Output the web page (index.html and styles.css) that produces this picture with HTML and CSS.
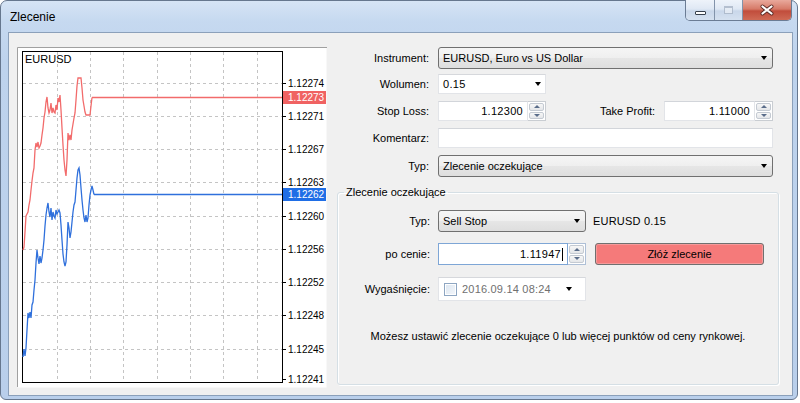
FILE: index.html
```html
<!DOCTYPE html>
<html lang="pl">
<head>
<meta charset="utf-8">
<title>Zlecenie</title>
<link rel="stylesheet" href="styles.css">
</head>
<body>
<div class="window">
  <div class="titlebar">
    <span class="title">Zlecenie</span>
    <div class="caption">
      <div class="cbtn cmin"><span class="min-glyph"></span></div>
      <div class="cbtn cmax"><span class="max-glyph"></span></div>
      <div class="cbtn cclose">
        <svg width="14" height="12" viewBox="-7 -6 14 12">
          <path d="M-4.5,-3.5 L4.5,3.5 M4.5,-3.5 L-4.5,3.5" stroke="#5b2b26" stroke-width="4" stroke-linecap="round"/>
          <path d="M-4.5,-3.5 L4.5,3.5 M4.5,-3.5 L-4.5,3.5" stroke="#ffffff" stroke-width="2.2" stroke-linecap="round"/>
        </svg>
      </div>
    </div>
  </div>
  <div class="client">
    <div class="chart">
      <svg width="310" height="341" viewBox="17 47 310 341">
        <rect x="17.5" y="47.5" width="309" height="340" fill="#ffffff" stroke="none"/>
        <path d="M17.5,387 V47.5 H327" stroke="#a0a0a0" fill="none"/>
        <g stroke="#c4c4c4" stroke-dasharray="3 3" fill="none">
          <path d="M57.5,52 V382 M90.5,52 V382 M123.5,52 V382 M157.5,52 V382 M190.5,52 V382 M223.5,52 V382 M257.5,52 V382"/>
          <path d="M23,83.5 H282 M23,116.5 H282 M23,149.5 H282 M23,182.5 H282 M23,216.5 H282 M23,249.5 H282 M23,282.5 H282 M23,315.5 H282 M23,349.5 H282"/>
        </g>
        <rect x="22.5" y="51.5" width="260" height="331" fill="none" stroke="#000000"/>
        <text class="sym-label" x="25" y="63">EURUSD</text>
        <g stroke="#000" fill="none">
          <path d="M283,83.5 H286 M283,116.5 H286 M283,149.5 H286 M283,182.5 H286 M283,216.5 H286 M283,249.5 H286 M283,282.5 H286 M283,315.5 H286 M283,349.5 H286 M283,379.5 H286"/>
        </g>
        <g class="axis">
          <text x="288" y="87">1.12274</text>
          <text x="288" y="120">1.12271</text>
          <text x="288" y="153">1.12267</text>
          <text x="288" y="186">1.12263</text>
          <text x="288" y="220">1.12260</text>
          <text x="288" y="253">1.12256</text>
          <text x="288" y="286">1.12252</text>
          <text x="288" y="319">1.12248</text>
          <text x="288" y="353">1.12245</text>
          <text x="288" y="383">1.12241</text>
        </g>
        <polyline fill="none" stroke="#f26b6b" stroke-width="1.3" points="23,250 24,247 25,232 26,216 27,214 28,212 29,205 30,200 31,190 32,181 33,173 34,168 35,150 36,143 37,147 38,142 39,148 40,146 41,143 42,135 43,128 44,118 45,112 46,102 47,97 48,108 49,113 50,110 51,103 52,113 53,108 54,112 55,113 56,105 57,110 58,98 59,102 60,95 61,110 62,128 63,145 64,160 65,170 66,176 67,160 68,133 69,140 70,135 71,140 72,130 73,124 74,118 75,113 76,100 77,86 78,78 81,78 82,88 83,100 84,106 85,112 86,115 90,115 91,106 92,97.5"/>
        <path d="M92,97.5 H282" stroke="#f26b6b" stroke-width="1.6" fill="none"/>
        <polyline fill="none" stroke="#2f70dc" stroke-width="1.3" points="23,357 24,349 25,356 26,348 27,330 28,313 29,318 30,312 31,318 32,305 33,302 34,290 35,280 36,263 37,250 38,258 39,264 40,256 41,263 42,258 43,250 44,240 45,226 46,215 47,208 48,203 49,212 50,217 51,208 52,220 53,212 54,216 55,218 56,210 57,214 58,212 59,210 60,213 61,225 62,240 63,254 64,262 65,266 66,262 67,245 68,222 69,228 70,238 71,232 72,222 73,212 74,205 75,202 76,190 77,178 78,170 79,168 80,175 81,188 82,200 83,210 84,218 85,222 86,215 87,222 88,218 89,205 90,195 91,190 92,186 93,190 94,194.5"/>
        <path d="M94,194.5 H282" stroke="#2f70dc" stroke-width="1.3" fill="none"/>
        <rect x="283" y="91" width="43" height="13" fill="#f06262"/>
        <text class="tag" x="288" y="101">1.12273</text>
        <rect x="283" y="188" width="43" height="13" fill="#1f6ee6"/>
        <text class="tag" x="288" y="198">1.12262</text>
      </svg>
    </div>

    <div class="form">
      <div class="row r1">
        <span class="lbl">Instrument:</span>
        <div class="combo w-full"><span class="ctext">EURUSD, Euro vs US Dollar</span><span class="arrow"></span></div>
      </div>
      <div class="row r2">
        <span class="lbl">Wolumen:</span>
        <div class="ecombo w-vol"><span class="ctext num">0.15</span><span class="arrow"></span></div>
      </div>
      <div class="row r3">
        <span class="lbl">Stop Loss:</span>
        <div class="spinbox w-sl">
          <span class="val num">1.12300</span>
          <span class="spin"><span class="up"><i></i></span><span class="dn"><i></i></span></span>
        </div>
        <span class="lbl tp">Take Profit:</span>
        <div class="spinbox w-tp">
          <span class="val num">1.11000</span>
          <span class="spin"><span class="up"><i></i></span><span class="dn"><i></i></span></span>
        </div>
      </div>
      <div class="row r4">
        <span class="lbl">Komentarz:</span>
        <div class="edit w-full"></div>
      </div>
      <div class="row r5">
        <span class="lbl">Typ:</span>
        <div class="combo w-full"><span class="ctext">Zlecenie oczekujące</span><span class="arrow"></span></div>
      </div>

      <fieldset class="group">
        <legend>Zlecenie oczekujące</legend>
        <div class="row g1">
          <span class="glbl">Typ:</span>
          <div class="combo w-g"><span class="ctext">Sell Stop</span><span class="arrow"></span></div>
          <span class="sym">EURUSD 0.15</span>
        </div>
        <div class="row g2">
          <span class="glbl">po cenie:</span>
          <div class="spinbox w-g focus">
            <span class="val num">1.11947<span class="caret"></span></span>
            <span class="spin"><span class="up"><i></i></span><span class="dn"><i></i></span></span>
          </div>
          <div class="btn">Złóż zlecenie</div>
        </div>
        <div class="row g3">
          <span class="glbl">Wygaśnięcie:</span>
          <div class="ecombo w-g exp">
            <span class="chk"></span>
            <span class="date">2016.09.14 08:24</span>
            <span class="arrow"></span>
          </div>
        </div>
        <p class="msg">Możesz ustawić zlecenie oczekujące 0 lub więcej punktów od ceny rynkowej.</p>
      </fieldset>
    </div>
  </div>
</div>
</body>
</html>
```

FILE: styles.css
```css
* { box-sizing: border-box; }
html, body { margin: 0; padding: 0; }
body {
  width: 800px;
  height: 403px;
  overflow: hidden;
  background: #ffffff;
  font-family: "Liberation Sans", Arial, sans-serif;
  font-size: 11px;
  color: #000;
}

.window {
  width: 798px;
  height: 400px;
  border: 1px solid #66778e;
  border-radius: 7px 7px 6px 6px;
  background: linear-gradient(to bottom, #d6e4f5 0px, #c6d9f0 20px, #bed3ed 60px, #b9cfeb 100%);
  padding: 0 4px 3px 7px;
  display: flex;
  flex-direction: column;
}

/* ---------- title bar ---------- */
.titlebar {
  height: 31px;
  flex: none;
  display: flex;
  align-items: flex-start;
  justify-content: space-between;
  margin: 0 -4px 0 -7px;
  padding: 0 5px 0 9px;
}
.title {
  font-size: 12px;
  line-height: 30px;
  padding-top: 1px;
  color: #000;
}
.caption {
  display: flex;
  height: 21px;
  margin-top: -1px;
  border: 1px solid #6b7c94;
  border-top: none;
  border-radius: 0 0 5px 5px;
  overflow: hidden;
}
.cbtn {
  display: flex;
  align-items: center;
  justify-content: center;
  height: 100%;
}
.cmin, .cmax {
  background: linear-gradient(to bottom, #eef3fa 0%, #dfe8f4 45%, #c9d7ea 55%, #d5e1f0 100%);
  border-right: 1px solid #8293aa;
}
.cmin { width: 29px; }
.cmax { width: 28px; }
.cclose {
  width: 48px;
  background: linear-gradient(to bottom, #e9a99c 0%, #d67a68 45%, #c14d3c 55%, #cf6a55 100%);
}
.min-glyph {
  width: 11px;
  height: 4px;
  margin-top: 5px;
  background: #fff;
  border: 1px solid #38404c;
  border-radius: 1px;
}
.max-glyph {
  width: 9px;
  height: 8px;
  border: 1px solid #a9b5c6;
  border-top-width: 2px;
  background: #e8eef6;
  opacity: 0.8;
}

/* ---------- client area ---------- */
.client {
  flex: 1;
  background: #f0f0f0;
  border: 1px solid #8ba0ba;
  display: flex;
  align-items: flex-start;
  padding: 14px 0 0 8px;
}
.chart { width: 310px; height: 341px; flex: none; }
.chart svg { display: block; }
.axis text { font-family: "Liberation Sans", Arial, sans-serif; font-size: 10px; fill: #000; }
.sym-label { font-family: "Liberation Sans", Arial, sans-serif; font-size: 11px; fill: #000; }
.tag { font-family: "Liberation Sans", Arial, sans-serif; font-size: 10px; fill: #fff; }

.form {
  margin-left: 10px;
  width: 442px;
  flex: none;
  display: flex;
  flex-direction: column;
}
.row { display: flex; align-items: center; }
.lbl { width: 92px; margin-right: 9px; text-align: right; flex: none; }
.lbl.tp { width: 109px; }

.r2 { margin-top: 5px; }
.r3 { margin-top: 7px; }
.r4 { margin-top: 7px; }
.r5 { margin-top: 7px; }

.w-full { width: 335px; }
.w-vol { width: 108px; }
.w-sl { width: 108px; }
.w-tp { width: 109px; }
.w-g { width: 148px; }

.combo {
  height: 22px;
  border: 1px solid #707070;
  border-radius: 3px;
  background: linear-gradient(to bottom, #f5f5f5 0%, #efefef 50%, #e6e6e6 51%, #dedede 100%);
  display: flex;
  align-items: center;
  padding-left: 4px;
  flex: none;
}
.ecombo {
  height: 20px;
  background: #fff;
  border: 1px solid #e2e4e8;
  border-top-color: #d6d8dc;
  display: flex;
  align-items: center;
  padding-left: 4px;
  flex: none;
}
.ctext { white-space: nowrap; }
.num { letter-spacing: 0.3px; }
.arrow {
  margin-left: auto;
  margin-right: 5px;
  width: 0;
  height: 0;
  border-top: 4px solid #000;
  border-left: 3.5px solid transparent;
  border-right: 3.5px solid transparent;
}
.ecombo .arrow { margin-right: 4px; }

.edit {
  height: 20px;
  background: #fff;
  border: 1px solid #e2e4e8;
  border-top-color: #d2d5da;
  flex: none;
}

.spinbox { height: 20px; display: flex; flex: none; }
.spinbox .val {
  flex: 1;
  background: #fff;
  border: 1px solid #e2e4e8;
  border-top-color: #d2d5da;
  text-align: right;
  padding-right: 4px;
  line-height: 18px;
  white-space: nowrap;
}
.spin {
  width: 18px;
  display: flex;
  flex-direction: column;
  border: 1px solid #c9cdd2;
  border-left: none;
  background: #fff;
}
.spin > span {
  flex: 1;
  display: flex;
  align-items: center;
  justify-content: center;
  margin: 1px 1px 0 1px;
  border: 1px solid #c4cad2;
  border-radius: 2px;
  background: linear-gradient(to bottom, #f7f7f7, #e4e6e9);
}
.spin > span.dn { margin-bottom: 1px; }
.spin .up i {
  width: 0; height: 0;
  border-bottom: 3px solid #5a6d8a;
  border-left: 3px solid transparent;
  border-right: 3px solid transparent;
}
.spin .dn i {
  width: 0; height: 0;
  border-top: 3px solid #5a6d8a;
  border-left: 3px solid transparent;
  border-right: 3px solid transparent;
}

/* ---------- group box ---------- */
.group {
  margin: 8px 0 0 0;
  padding: 0 6px;
  min-width: 0;
  height: 200px;
  border: 1px solid #d5dfe5;
  border-radius: 3px;
  box-shadow: inset 1px 1px 0 #fff, 1px 1px 0 #fff;
}
.group legend {
  padding: 0 2px;
  line-height: 14px;
  font-size: 11px;
}
.glbl { width: 86px; margin-right: 8px; text-align: right; flex: none; }
.g1 { margin-top: 11px; }
.g2 { margin-top: 11px; }
.g3 { margin-top: 12px; }
.g2 .spinbox { height: 22px; }
.g2 .spinbox .val { line-height: 20px; }
.focus .val { border-color: #7ea6d6; }
.focus .spin { border-color: #aebfd6; }
.caret {
  display: inline-block;
  width: 1px;
  height: 13px;
  background: #000;
  vertical-align: -3px;
  margin-left: 1px;
}
.sym { margin-left: 7px; letter-spacing: 0.2px; }

.btn {
  margin-left: 9px;
  width: 169px;
  height: 22px;
  flex: none;
  border: 1px solid #707070;
  border-radius: 3px;
  background: #f57a7a;
  box-shadow: inset 0 0 0 1px #f59a9a;
  display: flex;
  align-items: center;
  justify-content: center;
}

.exp { height: 24px; }
.chk {
  width: 13px;
  height: 13px;
  flex: none;
  border: 1px solid #8ea6c2;
  background: linear-gradient(135deg, #dce6f1, #f4f7fb);
  box-shadow: inset 0 0 0 1px #ffffff;
  margin-left: 1px;
}
.date {
  margin-left: 5px;
  white-space: nowrap;
  color: #707070;
  letter-spacing: 0.2px;
}
.exp .arrow { margin-right: 13px; }

.msg {
  margin: 28px 0 0 0;
  line-height: 14px;
  text-align: center;
}
```
